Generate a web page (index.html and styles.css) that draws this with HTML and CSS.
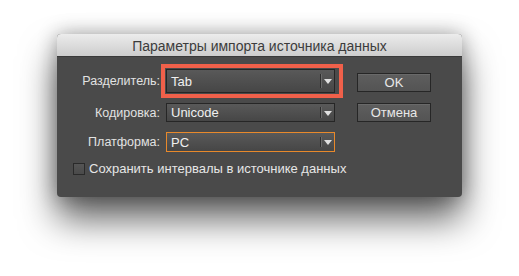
FILE: index.html
```html
<!DOCTYPE html>
<html lang="ru">
<head>
  <meta charset="UTF-8">
  <title>Параметры импорта источника данных</title>
  <link rel="stylesheet" href="styles.css">
</head>
<body>
  <div class="dialog">
    <div class="titlebar">Параметры импорта источника данных</div>
    <div class="panel">
      <div class="form">
        <label class="label">Разделитель:</label>
        <div class="select tall">
          <span class="value">Tab</span>
          <span class="arrow"></span>
          <span class="highlight"></span>
        </div>
        <button class="btn ok">OK</button>

        <label class="label">Кодировка:</label>
        <div class="select">
          <span class="value">Unicode</span>
          <span class="arrow"></span>
        </div>
        <button class="btn">Отмена</button>

        <label class="label">Платформа:</label>
        <div class="select focused">
          <span class="value">PC</span>
          <span class="arrow"></span>
        </div>
      </div>
      <div class="check">
        <span class="box"></span>
        <span>Сохранить интервалы в источнике данных</span>
      </div>
    </div>
  </div>
</body>
</html>
```

FILE: styles.css
```css
/* page */
html {
    background: #ffffff;
}
body {
    margin: 0;
    padding: 34px 0 0 57px;
    min-height: 100vh;
    box-sizing: border-box;
    font-family: "Liberation Sans", Arial, sans-serif;
    font-size: 12.5px;
    color: #e6e6e6;
}

/* dialog window */
.dialog {
    width: 405px;
    height: 163px;
    border-radius: 4px;
    background: #4a4a4a;
    box-shadow: 0 22px 36px rgba(0,0,0,0.62), 0 0 20px rgba(0,0,0,0.32);
}
.titlebar {
    height: 23px;
    line-height: 24px;
    text-align: center;
    font-size: 14px;
    color: #3c3c3c;
    background: linear-gradient(#ececec, #cdcdcd);
    border-bottom: 1px solid #3a3a3a;
    border-radius: 4px 4px 0 0;
    box-sizing: border-box;
}
.panel {
    padding-top: 12px;
}

/* form grid */
.form {
    display: grid;
    grid-template-columns: 103px 169px 90px;
    grid-template-rows: 24px 19px 20px;
    column-gap: 6px;
    row-gap: 10px;
}
.label {
    text-align: right;
    align-self: center;
    white-space: nowrap;
    color: #e2e2e2;
}
.btn {
    margin-left: 16px;
    height: 19px;
    padding: 0;
    font: inherit;
    font-size: 13px;
    color: #e8e8e8;
    background: linear-gradient(#5e5e5e, #545454);
    border: 1px solid #262626;
    box-shadow: inset 0 1px 0 rgba(255,255,255,0.08);
}
.btn.ok {
    align-self: end;
    margin-bottom: 1px;
}

/* dropdowns */
.select {
    position: relative;
    display: flex;
    align-items: center;
    background: linear-gradient(#595959, #464646);
    border: 1px solid #262626;
    box-sizing: border-box;
}
.select.focused {
    border-color: #e8892b;
}
.value {
    flex: 1;
    padding-left: 4px;
    font-size: 13px;
    color: #f0f0f0;
}
.arrow {
    width: 13px;
    height: 60%;
    border-left: 1px solid #2e2e2e;
    box-shadow: inset 1px 0 0 #6a6a6a;
    position: relative;
}
.arrow::after {
    content: "";
    position: absolute;
    left: 3px;
    top: 50%;
    margin-top: -2px;
    border-left: 4px solid transparent;
    border-right: 4px solid transparent;
    border-top: 5px solid #e0e0e0;
}

/* annotation frame around the first dropdown */
.highlight {
    position: absolute;
    left: -6px;
    right: -9px;
    top: -6px;
    bottom: -6px;
    border: 4px solid #f0604a;
}

/* checkbox row */
.check {
    display: flex;
    align-items: center;
    gap: 4px;
    margin: 9px 0 0 16px;
    font-size: 13px;
}
.box {
    width: 12px;
    height: 12px;
    box-sizing: border-box;
    border: 1px solid #2a2a2a;
    background: linear-gradient(#555555, #4a4a4a);
}
```
